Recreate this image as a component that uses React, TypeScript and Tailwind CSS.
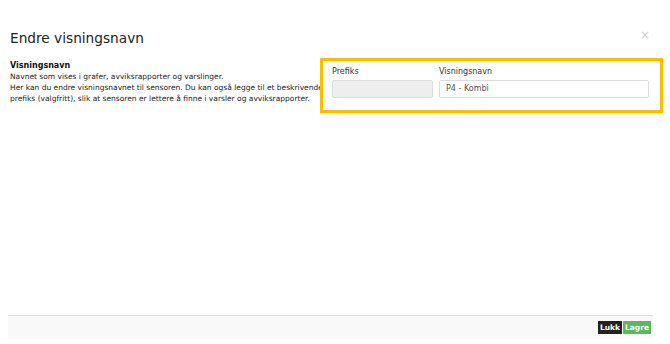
export default function App() {
  return (
    <div
      className="w-[670px] h-[344px] bg-white flex flex-col relative"
      style={{ fontFamily: '"DejaVu Sans", Verdana, sans-serif' }}
    >
      <div className="flex items-start justify-between pl-[10px] pr-[20px] pt-[28px] h-[56px]">
        <h1 className="text-[13.7px] leading-[20px] text-[#222]">Endre visningsnavn</h1>
        <span className="text-[12px] leading-[12px] text-[#ccc] mt-[1px]">×</span>
      </div>
      <div className="flex items-start pl-[10px] pr-[7px] h-[57px] mt-[2px]">
        <div className="w-[311px] text-[7.5px] leading-[11px] text-[#222] pt-[2px] whitespace-nowrap">
          <div className="font-bold text-[#111] text-[8px]">Visningsnavn</div>
          <div>Navnet som vises i grafer, avviksrapporter og varslinger.</div>
          <div>Her kan du endre visningsnavnet til sensoren. Du kan også legge til et beskrivende</div>
          <div>prefiks (valgfritt), slik at sensoren er lettere å finne i varsler og avviksrapporter.</div>
        </div>
        <div className="flex-1 h-[55px] border-[3px] border-[#fbbf00] flex gap-[6px] pl-[9px] pr-[11px] pt-[5px] -ml-[1px]">
          <div className="w-[101px] flex flex-col">
            <div className="text-[8px] leading-[12px] text-[#333] mb-[2px]">Prefiks</div>
            <div className="h-[18px] bg-[#eee] border border-[#ddd] rounded-[2px]" />
          </div>
          <div className="flex-1 flex flex-col">
            <div className="text-[8px] leading-[12px] text-[#333] mb-[2px]">Visningsnavn</div>
            <div className="h-[18px] bg-white border border-[#ddd] rounded-[2px] text-[8px] leading-[16px] text-[#555] pl-[6px]">
              P4 - Kombi
            </div>
          </div>
        </div>
      </div>
      <div className="flex-1" />
      <div className="ml-[8px] mr-[17px] mb-[5px] h-[24px] border-t border-[#ddd] bg-[#f9f9f9] flex items-center justify-end pr-[2px]">
        <button className="h-[13px] w-[24px] bg-[#222] text-white text-[7.5px] leading-[13px] font-bold">Lukk</button>
        <button className="h-[13px] w-[28px] ml-[1px] bg-[#5cb85c] text-white text-[7.5px] leading-[13px] font-bold">Lagre</button>
      </div>
    </div>
  );
}
